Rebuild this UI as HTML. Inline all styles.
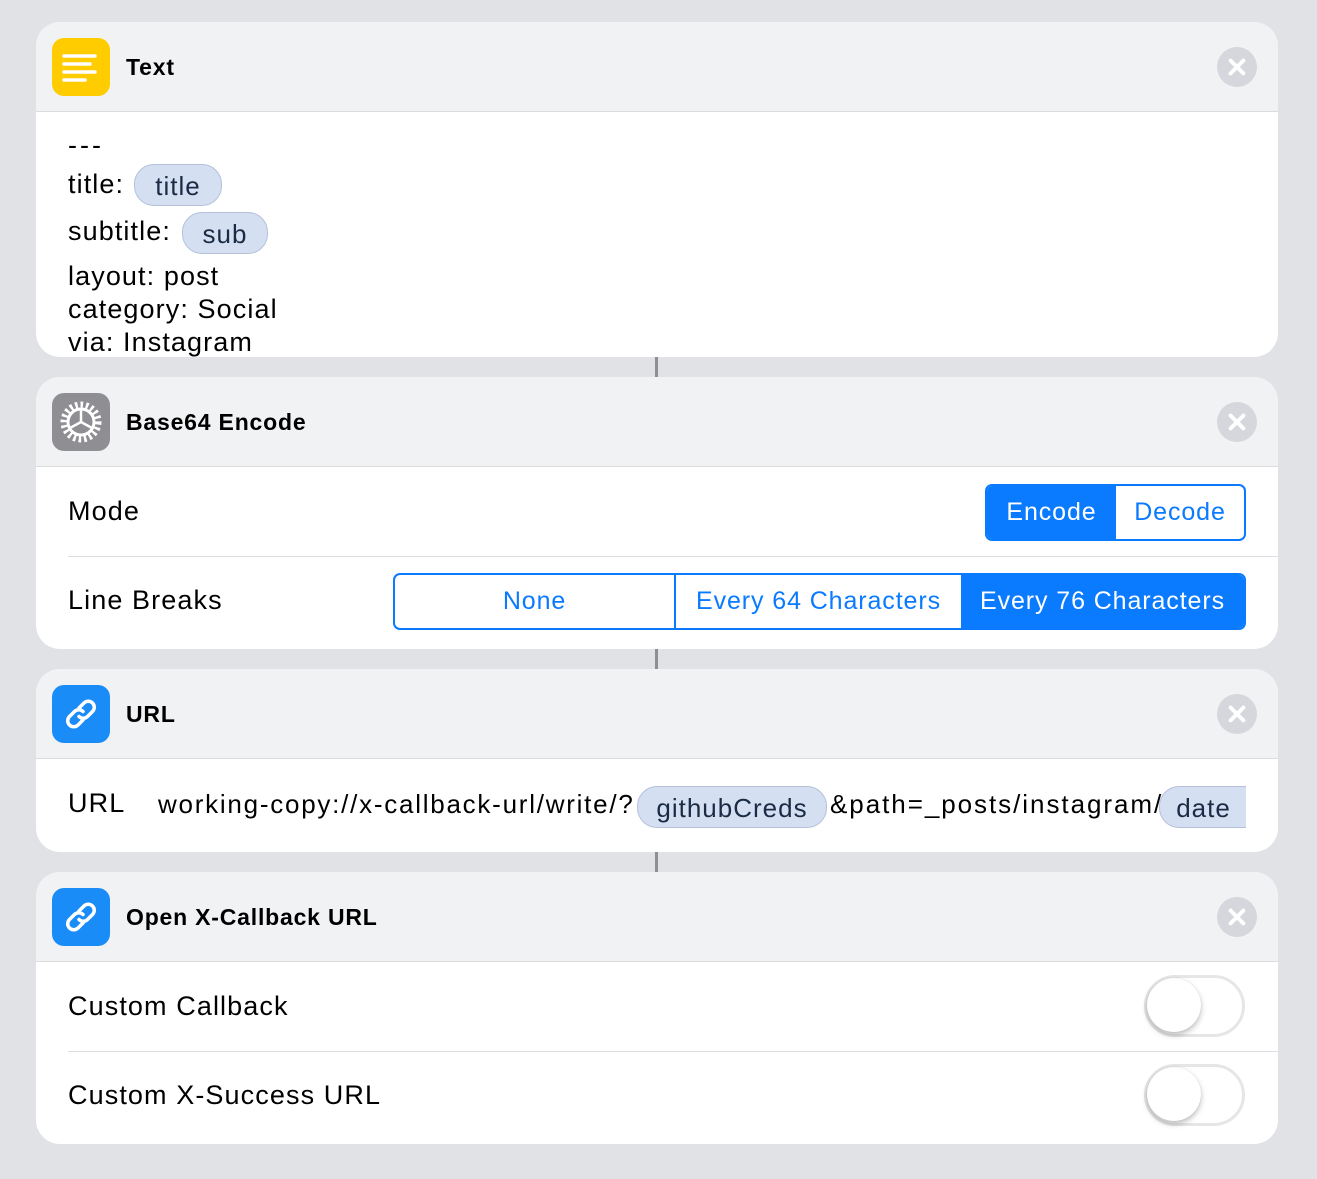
<!DOCTYPE html>
<html><head><style>
*{margin:0;padding:0;box-sizing:border-box}
body{width:1317px;height:1179px;background:#e1e2e6;font-family:"Liberation Sans",sans-serif;position:relative;overflow:hidden;color:#000}
.card{position:absolute;left:36px;width:1242px;background:#fff;border-radius:24px;overflow:hidden}
.hd{position:absolute;left:0;top:0;width:100%;height:90px;background:#f1f2f4;border-bottom:1px solid #dcdcdf}
.ic{position:absolute;left:16px;top:16px;width:58px;height:58px;border-radius:12px}
.ht{position:absolute;left:90px;top:32px;font-size:23px;font-weight:bold;letter-spacing:0.8px}
.x{position:absolute;right:21px;top:25px;width:40px;height:40px;border-radius:50%;background:#d6d7dc}
.x:before,.x:after{content:"";position:absolute;left:9px;top:18px;width:22px;height:4px;border-radius:2px;background:#fff;transform:rotate(45deg)}
.x:after{transform:rotate(-45deg)}
.t{position:absolute;font-size:27px;white-space:nowrap;letter-spacing:1.1px}
.tok{position:absolute;background:#d4dff2;border:1px solid #b4c1d8;border-radius:20px;font-size:26px;color:#1c2b45;text-align:center;white-space:nowrap;letter-spacing:1px}
.line{position:absolute;left:32px;right:0;height:1px;background:#dedee2}
.conn{position:absolute;left:655px;width:3px;background:#8e8e93}
.seg{position:absolute;border:2px solid #0a7aff;border-radius:7px;display:flex;overflow:hidden}
.seg div{display:flex;align-items:center;justify-content:center;font-size:25px;color:#0a7aff;letter-spacing:0.9px}
.seg .on{background:#0a7aff;color:#fff}
.sw{position:absolute;left:1108px;width:101px;height:62px;border-radius:31px;border:3px solid #e6e6e8;background:#fff}
.sw:after{content:"";position:absolute;left:0px;top:0px;width:54px;height:54px;border-radius:50%;background:#fff;box-shadow:0 3px 6px rgba(0,0,0,.25),0 0 1px rgba(0,0,0,.2)}
</style></head><body>
<div class="conn" style="top:357px;height:20px"></div>
<div class="conn" style="top:649px;height:20px"></div>
<div class="conn" style="top:852px;height:20px"></div>

<div class="card" style="top:22px;height:335px">
 <div class="hd"><div class="ic" style="background:#ffcc00">
  <svg width="58" height="58"><g stroke="#fff" stroke-width="3.5" stroke-linecap="round"><line x1="12" y1="18" x2="43" y2="18"/><line x1="12" y1="26" x2="38" y2="26"/><line x1="12" y1="34" x2="43" y2="34"/><line x1="12" y1="42" x2="33" y2="42"/></g></svg></div>
  <div class="ht">Text</div><div class="x"></div></div>
 <div class="t" style="left:32px;top:108px;letter-spacing:3px">---</div>
 <div class="t" style="left:32px;top:147px">title:</div>
 <div class="tok" style="left:98px;top:142px;width:88px;height:42px;line-height:42px">title</div>
 <div class="t" style="left:32px;top:194px">subtitle:</div>
 <div class="tok" style="left:146px;top:190px;width:86px;height:42px;line-height:42px">sub</div>
 <div class="t" style="left:32px;top:239px">layout: post</div>
 <div class="t" style="left:32px;top:272px">category: Social</div>
 <div class="t" style="left:32px;top:305px">via: Instagram</div>
</div>

<div class="card" style="top:377px;height:272px">
 <div class="hd"><div class="ic" style="background:#8e8e93">
  <svg width="58" height="58" viewBox="0 0 58 58"><g fill="none" stroke="#fff"><circle cx="29" cy="29" r="17" stroke-width="7" stroke-dasharray="2.5 2.8"/><circle cx="29" cy="29" r="13" stroke-width="3"/><path d="M29 29L29 16M29 29L40 35M29 29L18 35" stroke-width="2.5"/></g></svg></div>
  <div class="ht">Base64 Encode</div><div class="x"></div></div>
 <div class="t" style="left:32px;top:119px">Mode</div>
 <div class="seg" style="left:949px;top:107px;width:261px;height:57px"><div class="on" style="width:129px">Encode</div><div style="flex:1">Decode</div></div>
 <div class="line" style="top:179px"></div>
 <div class="t" style="left:32px;top:208px">Line Breaks</div>
 <div class="seg" style="left:357px;top:196px;width:853px;height:57px"><div style="width:281px;border-right:2px solid #0a7aff">None</div><div style="width:285px">Every 64 Characters</div><div class="on" style="flex:1">Every 76 Characters</div></div>
</div>

<div class="card" style="top:669px;height:183px">
 <div class="hd"><div class="ic" style="background:#1a8cf7">
  <svg width="58" height="58" viewBox="0 0 58 58"><g fill="none" stroke="#fff" stroke-width="3.5" stroke-linecap="round"><path d="M27 23l5-5a6 6 0 0 1 8.5 8.5l-5 5a6 6 0 0 1-8.5 0"/><path d="M31 35l-5 5a6 6 0 0 1-8.5-8.5l5-5a6 6 0 0 1 8.5 0"/></g></svg></div>
  <div class="ht">URL</div><div class="x"></div></div>
 <div class="t" style="left:32px;top:119px">URL</div>
 <div class="t" style="left:122px;top:120px;font-size:26px;letter-spacing:1.75px">working-copy://x-callback-url/write/?</div>
 <div class="tok" style="left:601px;top:117px;width:190px;height:42px;line-height:42px">githubCreds</div>
 <div class="t" style="left:794px;top:120px;font-size:26px;letter-spacing:1.95px">&amp;path=_posts/instagram/</div>
 <div class="tok" style="left:1123px;top:117px;width:100px;height:42px;line-height:42px;border-right:none;border-radius:20px 0 0 20px;padding-right:12px">date</div>
 <div style="position:absolute;left:1210px;top:110px;width:32px;height:60px;background:#fff"></div>
</div>

<div class="card" style="top:872px;height:272px">
 <div class="hd"><div class="ic" style="background:#1a8cf7">
  <svg width="58" height="58" viewBox="0 0 58 58"><g fill="none" stroke="#fff" stroke-width="3.5" stroke-linecap="round"><path d="M27 23l5-5a6 6 0 0 1 8.5 8.5l-5 5a6 6 0 0 1-8.5 0"/><path d="M31 35l-5 5a6 6 0 0 1-8.5-8.5l5-5a6 6 0 0 1 8.5 0"/></g></svg></div>
  <div class="ht">Open X-Callback URL</div><div class="x"></div></div>
 <div class="t" style="left:32px;top:119px">Custom Callback</div>
 <div class="sw" style="top:103px"></div>
 <div class="line" style="top:179px"></div>
 <div class="t" style="left:32px;top:208px">Custom X-Success URL</div>
 <div class="sw" style="top:192px"></div>
</div>
</body></html>
